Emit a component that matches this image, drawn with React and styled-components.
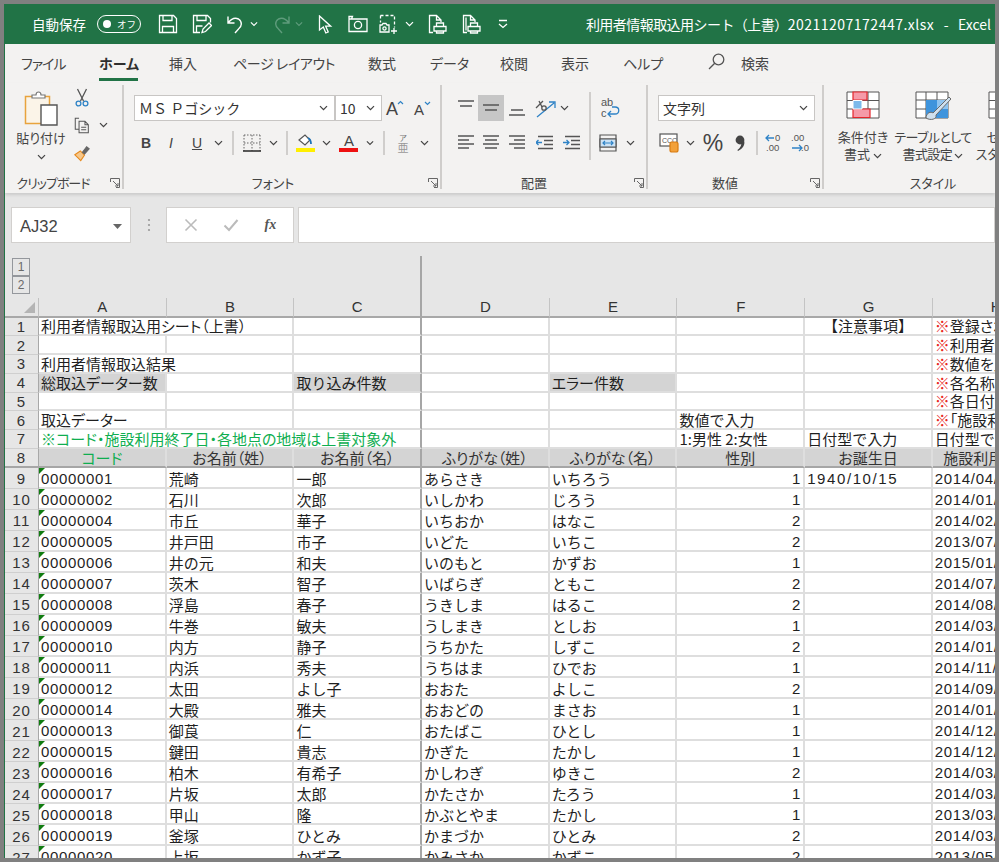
import React from 'react';
import styled, { createGlobalStyle } from 'styled-components';

const UI_FONT = '"Noto Sans CJK JP", "Noto Sans", sans-serif';
const GREEN = '#217346';
const INK = '#444444';

const GlobalStyle = createGlobalStyle`
    html, body { margin: 0; padding: 0; background: #808080; }
    body { font-family: ${UI_FONT}; }
`;

const Frame = styled.div`
    width: 999px;
    height: 862px;
    box-sizing: border-box;
    border: 4px solid #808080;
    overflow: hidden;
`;

const Inner = styled.div`
    height: 100%;
    box-sizing: border-box;
    border-left: 1px solid ${GREEN};
    background: #e6e6e6;
    overflow: hidden;
`;

/* title bar */
const TitleBar = styled.div`
    height: 40px;
    background: ${GREEN};
    color: #fff;
    display: flex;
    align-items: center;
    padding-left: 27px;
`;

const AutoSave = styled.span`
    font-size: 13.5px;
    width: 65px;
    font-feature-settings: "palt";
`;

const Toggle = styled.div`
    width: 44px;
    height: 18px;
    box-sizing: border-box;
    border: 1px solid #fff;
    border-radius: 9px;
    display: flex;
    align-items: center;
    padding-left: 5px;
    font-size: 9.5px;
    margin-right: 8px;
    &::before {
        content: '';
        width: 8px;
        height: 8px;
        border-radius: 50%;
        background: #fff;
        margin-right: 6px;
    }
`;

const QuickTool = styled.div`
    width: ${p => p.$w}px;
    margin-left: ${p => p.$ml || 0}px;
    display: flex;
    align-items: center;
    justify-content: center;
    flex: none;
`;

const FileName = styled.div`
    margin-left: auto;
    padding-right: 4px;
    font-size: 14px;
    white-space: pre;
`;

const FilePrefix = styled.span`
    letter-spacing: -0.55px;
`;

const FileStamp = styled.span`
    letter-spacing: 0.5px;
`;

/* tabs */
const TabBar = styled.div`
    height: 39px;
    background: #f3f2f1;
    display: flex;
    align-items: center;
    padding-left: 16px;
    padding-bottom: 1px;
    box-sizing: border-box;
`;

const Tab = styled.div`
    width: ${p => p.$w}px;
    flex: none;
    font-size: 14px;
    color: ${INK};
    white-space: pre;
    font-feature-settings: "palt";
    letter-spacing: ${p => p.$ls || 0}px;
    position: relative;
    font-weight: ${p => (p.$active ? 700 : 400)};
    ${p => p.$active && `color: #2f2f2f;
    &::after {
        content: '';
        position: absolute;
        left: 0;
        top: 25px;
        width: 39px;
        height: 3px;
        background: ${GREEN};
    }`}
`;

/* ribbon */
const Ribbon = styled.div`
    height: 110px;
    background: #f3f2f1;
    display: flex;
    padding-top: 2px;
    padding-bottom: 4px;
    box-sizing: border-box;
    box-shadow: 0 2px 3px rgba(0, 0, 0, 0.12);
    overflow: hidden;
    position: relative;
`;

const Group = styled.div`
    width: ${p => p.$w}px;
    flex: none;
    box-sizing: border-box;
    ${p => !p.$last && 'border-right: 2px solid #cfcdcb;'}
    display: flex;
    flex-direction: column;
`;

const GroupBody = styled.div`
    flex: 1;
    display: flex;
    padding-left: ${p => p.$pad || 0}px;
    min-height: 0;
`;

const GroupLabel = styled.div`
    height: 12px;
    font-size: 13px;
    line-height: 12px;
    text-align: center;
    color: ${INK};
    position: relative;
    font-feature-settings: "palt";
    letter-spacing: ${p => p.$ls || 0}px;
    padding-right: ${p => p.$shift || 0}px;
`;

const Launcher = styled.svg`
    position: absolute;
    right: 2px;
    top: 1px;
    width: 10px;
    height: 10px;
`;

const Stack = styled.div`
    display: flex;
    flex-direction: column;
    padding-top: 10px;
    gap: 10px;
`;

const ToolRow = styled.div`
    height: 25.5px;
    display: flex;
    align-items: center;
    flex: none;
`;

const Tool = styled.div`
    width: ${p => p.$w}px;
    height: ${p => (p.$on ? '26px' : 'auto')};
    flex: none;
    display: flex;
    align-items: center;
    justify-content: center;
    font-family: "Liberation Sans", sans-serif;
    color: ${INK};
    background: ${p => (p.$on ? '#c6c6c6' : 'transparent')};
`;

const VSep = styled.div`
    width: 2px;
    height: ${p => p.$h || 24}px;
    background: #d0cecc;
    flex: none;
    margin-left: ${p => p.$ml || 0}px;
    margin-top: ${p => p.$mt || 0}px;
`;

const SelectBox = styled.div`
    width: ${p => p.$w}px;
    height: 25.5px;
    box-sizing: border-box;
    background: #fff;
    border: 1px solid #c8c6c4;
    display: flex;
    align-items: center;
    padding: 0 6px 0 4px;
    flex: none;
    font-size: 14px;
    color: #333;
    white-space: pre;
    justify-content: space-between;
`;

const PasteCol = styled.div`
    width: 66px;
    margin-left: 3px;
    display: flex;
    flex-direction: column;
    align-items: center;
    padding-top: 5px;
    font-size: 13px;
    color: ${INK};
    font-feature-settings: "palt";
`;

const PasteText = styled.div`
    margin-top: 3px;
    margin-bottom: 7px;
    line-height: 18px;
`;

const ClipTools = styled.div`
    display: flex;
    flex-direction: column;
    padding-top: 3px;
    gap: 9px;
`;

const ClipRow = styled.div`
    display: flex;
    align-items: center;
`;

const StyleItem = styled.div`
    width: ${p => p.$w}px;
    flex: none;
    display: flex;
    flex-direction: column;
    align-items: center;
    padding-top: 6px;
    font-size: 13px;
    line-height: 17px;
    color: ${INK};
    white-space: nowrap;
    font-feature-settings: "palt";
`;

const StyleIconSlot = styled.div`
    margin-left: ${p => p.$ml || 0}px;
    height: 30px;
`;

const StyleText = styled.div`
    margin-top: 7px;
    text-align: center;
    letter-spacing: ${p => p.$ls || 0}px;
`;

/* formula bar */
const FormulaBar = styled.div`
    display: flex;
    align-items: stretch;
    height: 36px;
    margin-top: 14px;
    padding-left: 6px;
    gap: 4px;
`;

const NameBox = styled.div`
    width: 120px;
    box-sizing: border-box;
    background: #fff;
    border: 1px solid #d2d0ce;
    display: flex;
    align-items: center;
    justify-content: space-between;
    padding: 3px 8px 0 8px;
    font-family: "Liberation Sans", sans-serif;
    font-size: 16.5px;
    color: ${INK};
`;

const DotsCol = styled.div`
    width: 27px;
    display: flex;
    align-items: center;
    justify-content: center;
`;

const FormulaTools = styled.div`
    width: 128px;
    box-sizing: border-box;
    background: #fff;
    border: 1px solid #d2d0ce;
    display: flex;
    align-items: center;
    justify-content: space-around;
    padding: 0 4px;
`;

const FormulaInput = styled.div`
    flex: 1;
    background: #fff;
    border: 1px solid #d2d0ce;
`;

/* outline + grid */
const OutlineBar = styled.div`
    height: 42px;
    margin-top: 13px;
    width: 417px;
    box-sizing: border-box;
    border-right: 2px solid #a6a6a6;
    display: flex;
    flex-direction: column;
    padding: 2px 0 0 7px;
`;

const LevelButton = styled.div`
    width: 18px;
    height: 18px;
    box-sizing: border-box;
    border: 1px solid #94979c;
    background: #e6e6e6;
    color: #6a6a6a;
    font-family: "Liberation Sans", sans-serif;
    font-size: 12px;
    display: flex;
    align-items: center;
    justify-content: center;
`;

const Sheet = styled.div`
    display: grid;
    grid-template-columns: 34px repeat(8, 127.7px);
    grid-template-rows: 19.5px repeat(8, 18.75px) repeat(19, 21.05px);
    background: #fff;
`;

const Corner = styled.div`
    background: #e6e6e6;
    border-right: 1px solid #c0c0c0;
    border-bottom: 2px solid #a8a8a8;
    box-sizing: border-box;
    position: relative;
    &::after {
        content: '';
        position: absolute;
        right: 3px;
        bottom: 3px;
        border-style: solid;
        border-width: 0 0 11px 11px;
        border-color: transparent transparent #b4b4b4 transparent;
    }
`;

const ColHead = styled.div`
    background: #e6e6e6;
    box-sizing: border-box;
    border-right: ${p => (p.$freeze ? '2px solid #a6a6a6' : '1px solid #c4c4c4')};
    border-bottom: 2px solid #a8a8a8;
    font-family: "Liberation Sans", sans-serif;
    font-size: 15px;
    color: #333;
    display: flex;
    align-items: center;
    justify-content: center;
`;

const RowHead = styled.div`
    background: #e6e6e6;
    box-sizing: border-box;
    border-right: 1px solid #a8a8a8;
    border-bottom: ${p => (p.$band ? '2px solid #a6a6a6' : '1px solid #cfcfcf')};
    font-family: "Liberation Sans", sans-serif;
    font-size: 15px;
    letter-spacing: 1px;
    color: #333;
    display: flex;
    align-items: center;
    justify-content: center;
    padding-top: ${p => (p.$tall ? 2 : 0)}px;
`;

const Cell = styled.div`
    box-sizing: border-box;
    position: relative;
    min-width: 0;
    border-right: ${p => (p.$freeze ? '2px solid #a6a6a6' : p.$open ? '0' : '2px solid #dedede')};
    border-bottom: ${p => (p.$band ? '2px solid #a6a6a6' : '2px solid #dedede')};
    background: ${p => (p.$fill ? '#d4d4d4' : 'transparent')};
    display: flex;
    align-items: center;
    justify-content: ${p => p.$align || 'flex-start'};
    padding: ${p => (p.$tall ? '2px' : '0')} 2px 0 2px;
    font-size: 15px;
    line-height: 17px;
    white-space: nowrap;
    color: ${p => p.$color || '#1f1f1f'};
    ${p => p.$palt && 'font-feature-settings: "palt";'}
    &::before {
        ${p => p.$flag && `content: '';
        position: absolute;
        left: 0;
        top: 0;
        border-style: solid;
        border-width: 6px 6px 0 0;
        border-color: #107c10 transparent transparent transparent;`}
    }
`;

const Digits = styled.span`
    font-family: "Liberation Sans", sans-serif;
    letter-spacing: ${p => p.$gap || 0.66}px;
`;

const Alert = styled.span`
    color: #e8281e;
`;

/* icons */
const Chev = ({ c = INK, s = 9 }) => (
    <svg width={s} height={s * 0.7} viewBox="0 0 9 6" fill="none" stroke={c} strokeWidth="1.3"><path d="M1 1l3.5 3.5L8 1" /></svg>
);

const Lines = ({ d }) => (
    <svg width="20" height="20" viewBox="0 0 20 20" fill="none" stroke="#555" strokeWidth="1.3"><path d={d} /></svg>
);

const SaveIcon = () => (
    <svg width="20" height="20" viewBox="0 0 20 20" fill="none" stroke="#fff" strokeWidth="1.3">
        <path d="M1.5 1.5h14l3 3v14h-17z M5 1.5v5h9v-5 M4.5 18.5v-6h11v6" />
    </svg>
);

const SaveAsIcon = () => (
    <svg width="20" height="20" viewBox="0 0 20 20" fill="none" stroke="#fff" strokeWidth="1.3">
        <path d="M8 18.5H1.5v-17h14l3 3v4 M5 1.5v5h9v-5 M4.5 18v-6h6" />
        <path d="M10 18.5l1-3.5 6-6 2.5 2.5-6 6z" />
    </svg>
);

const UndoIcon = ({ c = '#fff', flip }) => (
    <svg width="20" height="20" viewBox="0 0 20 20" fill="none" stroke={c} strokeWidth="1.4" transform={flip ? 'scale(-1 1)' : undefined}>
        <path d="M2 2.5v6.5h6.5 M2.5 8.5c3-4 7-5 10-3.5 4 2.5 3.5 7.5 0 10l-3.5 4" />
    </svg>
);

const CursorIcon = () => (
    <svg width="15" height="19" viewBox="0 0 15 19" fill="none" stroke="#fff" strokeWidth="1.3">
        <path d="M1.5 1v14l3.8-3 2.5 6 2.4-1-2.5-5.8h5z" />
    </svg>
);

const CameraIcon = () => (
    <svg width="20" height="18" viewBox="0 0 20 18" fill="none" stroke="#fff" strokeWidth="1.3">
        <path d="M1 4h2.5l1-2.5H1z M1 4h18v12.5H1z" />
        <circle cx="10" cy="10" r="3.6" />
    </svg>
);

const SnipIcon = () => (
    <svg width="18" height="20" viewBox="0 0 18 20" fill="none" stroke="#fff" strokeWidth="1.3">
        <path d="M1.5 1.5h14v12 M1.5 1.5v7" strokeDasharray="3 2" />
        <path d="M1 11h2l1-1.5h3l1 1.5h2v7H1z" />
        <circle cx="5.5" cy="14.5" r="1.6" />
        <path d="M15 14v6 M12 17h6" />
    </svg>
);

const PrintIcon = ({ stacked }) => (
    <svg width="19" height="20" viewBox="0 0 19 20" fill="none" stroke="#fff" strokeWidth="1.3">
        <path d="M5 18.5H1.5v-17h7l4.5 4.5v2 M8.5 1.5v4.5H13" />
        {stacked && <path d="M4 3.5v13" />}
        <path d="M6 12.5h12v4.5H6z M8.5 12.5v-3.5h7v3.5 M8.5 17v2h7v-2" />
    </svg>
);

const CustomizeIcon = () => (
    <svg width="10" height="10" viewBox="0 0 10 10" fill="none" stroke="#fff" strokeWidth="1.3"><path d="M1 1.5h8 M1 5l4 3.5L9 5" /></svg>
);

const SearchIcon = () => (
    <svg width="17" height="17" viewBox="0 0 17 17" fill="none" stroke="#555" strokeWidth="1.3">
        <circle cx="10.5" cy="6.5" r="5.3" /><path d="M6.7 10.3L1 16" />
    </svg>
);

const PasteIcon = () => (
    <svg width="34" height="36" viewBox="0 0 34 36" fill="none">
        <path d="M1.5 6.5h24v27h-24z" stroke="#e8a33d" strokeWidth="1.5" fill="#fbf4e8" />
        <path d="M8 8V5h4c0-4 5-4 5 0h4v3z" stroke="#777" strokeWidth="1.2" fill="#fff" />
        <path d="M17 15h16v20H17z" stroke="#555" strokeWidth="1.4" fill="#fff" />
    </svg>
);

const CutIcon = () => (
    <svg width="14" height="19" viewBox="0 0 14 19" fill="none" strokeWidth="1.3">
        <path d="M2.5 1l6 12 M11.5 1l-6 12" stroke="#555" />
        <circle cx="3.5" cy="15.5" r="2.4" stroke="#2f83c6" /><circle cx="10.5" cy="15.5" r="2.4" stroke="#2f83c6" />
    </svg>
);

const CopyIcon = () => (
    <svg width="19" height="19" viewBox="0 0 19 19" fill="none" stroke="#555" strokeWidth="1.2">
        <path d="M6 1H1.5v13H6" /><path d="M6 4.5h7l4 4v9.5H6z M13 4.5v4h4 M8.5 11.5h6 M8.5 14.5h6" />
    </svg>
);

const BrushIcon = () => (
    <svg width="19" height="19" viewBox="0 0 19 19" fill="none" strokeWidth="1.3">
        <path d="M1 11l6.5-4.5 5 5L8 18C6 16 3 13 1 11z" stroke="#e68a1e" fill="#f6c78a" />
        <path d="M10 8l5-6.5 3 2.5-5.5 6z" fill="#666" stroke="#666" />
    </svg>
);

const AlignLines = {
    top: 'M2 3h16 M4 8h12',
    middle: 'M2 7h16 M4 12h12',
    bottom: 'M4 12h12 M2 17h16',
    left: 'M2 3h16 M2 7h11 M2 11h16 M2 15h11',
    center: 'M2 3h16 M4 7h12 M2 11h16 M4 15h12',
    right: 'M2 3h16 M7 7h11 M2 11h16 M7 15h11',
};

const IndentIcon = ({ inc }) => (
    <svg width="18" height="16" viewBox="0 0 18 16" fill="none" strokeWidth="1.3">
        <path d="M2 1.5h15 M8 5.5h9 M8 9.5h9 M2 13.5h15" stroke="#555" />
        <path d={inc ? 'M0 7.5h6 M3.5 5l2.5 2.5L3.5 10' : 'M6 7.5H0 M2.5 5L0 7.5 2.5 10'} stroke="#2f83c6" />
    </svg>
);

const OrientIcon = () => (
    <svg width="22" height="20" viewBox="0 0 22 20" fill="none" strokeWidth="1.3">
        <path d="M3 19L20 5 M15 4h6v6" stroke="#2f83c6" />
        <path d="M2 10l7-7 M5 3l3 6" stroke="#555" />
        <circle cx="10" cy="10" r="2.2" stroke="#555" />
    </svg>
);

const WrapIcon = () => (
    <svg width="20" height="22" viewBox="0 0 20 22" fill="none" strokeWidth="1.3">
        <text x="1" y="9" fontSize="11" fontFamily="Liberation Sans, sans-serif" fill="#555">ab</text>
        <text x="1" y="20" fontSize="11" fontFamily="Liberation Sans, sans-serif" fill="#555">c</text>
        <path d="M8 17h7c5 0 5-7 0-7h-3 M11 14l-3 3 3 3" stroke="#2f83c6" />
    </svg>
);

const MergeIcon = () => (
    <svg width="18" height="18" viewBox="0 0 18 18" strokeWidth="1.2">
        <path d="M1 1h16v16H1z M1 5h16 M1 13h16" stroke="#555" fill="none" />
        <path d="M1 5h16v8H1z" fill="#cde3f5" stroke="#555" />
        <path d="M4 9h10 M6 7L4 9l2 2 M12 7l2 2-2 2" stroke="#2f83c6" fill="none" />
    </svg>
);

const BorderIcon = () => (
    <svg width="18" height="18" viewBox="0 0 18 18" fill="none" stroke="#666" strokeWidth="1">
        <path d="M1 1h16 M1 1v16 M17 1v16 M1 9h16 M9 1v16" strokeDasharray="1.5 1.5" />
        <path d="M0 17h18" strokeWidth="1.6" stroke="#333" />
    </svg>
);

const FillIcon = () => (
    <svg width="20" height="20" viewBox="0 0 20 20" fill="none">
        <path d="M3 7l6-5 5 5-5 5z" stroke="#555" strokeWidth="1.2" fill="#fff" />
        <path d="M15 11c0-3-1-5-3-6" stroke="#1b72b8" strokeWidth="1.8" />
        <rect x="0" y="15" width="19" height="4" fill="#ffef00" />
    </svg>
);

const FontColorIcon = () => (
    <svg width="20" height="20" viewBox="0 0 20 20">
        <text x="10" y="13" textAnchor="middle" fontSize="15" fontFamily="Liberation Sans, sans-serif" fill="#444">A</text>
        <rect x="0" y="15" width="19" height="4" fill="#ee1111" />
    </svg>
);

const PhoneticIcon = () => (
    <svg width="16" height="20" viewBox="0 0 16 20">
        <text x="8" y="8" textAnchor="middle" fontSize="8" fontFamily="Noto Sans CJK JP, sans-serif" fill="#777">ア</text>
        <text x="8" y="19" textAnchor="middle" fontSize="11" fontFamily="Noto Sans CJK JP, sans-serif" fill="#999">亜</text>
    </svg>
);

const GrowFont = ({ up }) => (
    <svg width="20" height="20" viewBox="0 0 20 20">
        <text x="7" y="17" textAnchor="middle" fontSize={up ? 18 : 15} fontFamily="Liberation Sans, sans-serif" fill="#444">A</text>
        <path d={up ? 'M13 6l2.5-2.5L18 6' : 'M13 4l2.5 2.5L18 4'} fill="none" stroke="#2f83c6" strokeWidth="1.2" />
    </svg>
);

const AccountIcon = () => (
    <svg width="22" height="22" viewBox="0 0 22 22" fill="none" strokeWidth="1.2">
        <rect x="1" y="2" width="17" height="12" fill="#fff" stroke="#555" />
        <text x="3" y="11" fontSize="7" fontFamily="Liberation Sans, sans-serif" fill="#555">CCC</text>
        <rect x="11" y="10" width="8" height="10" rx="2" fill="#f2a13a" stroke="#d97d12" />
    </svg>
);

const CommaIcon = () => (
    <svg width="12" height="18" viewBox="0 0 12 18" fill="#444">
        <circle cx="6" cy="6" r="4.4" />
        <path d="M7 6c3 0 3.5 1 3.4 3-.2 3.5-3 6.5-6.4 8l-.6-1C6 14.5 8 11 7 8z" />
    </svg>
);

const Decimal = ({ inc }) => (
    <svg width="22" height="20" viewBox="0 0 22 20" fill="none">
        <text x={inc ? 10 : 0} y="8" fontSize="9.5" fontFamily="Liberation Sans, sans-serif" fill="#555">{inc ? '0' : '.00'}</text>
        <text x={inc ? 1 : 10} y="18" fontSize="9.5" fontFamily="Liberation Sans, sans-serif" fill="#555">{inc ? '.00' : '.0'}</text>
        <path d={inc ? 'M9 5H1 M4 2L1 5l3 3' : 'M1 15h10 M8 12l3 3-3 3'} stroke="#2f83c6" strokeWidth="1.3" />
    </svg>
);

const CondFormatIcon = () => (
    <svg width="34" height="28" viewBox="0 0 34 28" strokeWidth="1">
        <path d="M1 1h32v26H1z M1 9.5h32 M1 18h32 M11 1v26 M22 1v26" fill="#fff" stroke="#555" />
        <path d="M7 1h14v8H7z M7 18h17v8.5H7z" fill="#f59aa8" stroke="#e5262c" strokeWidth="1.2" />
        <path d="M7 9.5h9V18H7z" fill="#7cb9ea" stroke="#fff" />
    </svg>
);

const TableFormatIcon = () => (
    <svg width="36" height="30" viewBox="0 0 36 30" strokeWidth="1">
        <path d="M1 1h32v26H1z M1 9h32 M1 18h32 M11 1v26 M22 1v26" fill="#fff" stroke="#555" />
        <path d="M11 9h22v18H11z" fill="#3f94dc" />
        <path d="M22 9h11v9H22z" fill="#8fc4f0" />
        <path d="M11 27c0-5 5-7 7-5L34 6l2 2-15 16c1 4-5 6-10 3z" fill="#cfe0ee" stroke="#6a6a6a" />
    </svg>
);

const CellStyleIcon = () => (
    <svg width="34" height="28" viewBox="0 0 34 28" strokeWidth="1">
        <path d="M1 1h32v26H1z M1 9.5h32 M1 18h32 M11 1v26" fill="#fff" stroke="#555" />
        <path d="M11 9.5h12V18H11z" fill="#3f94dc" />
    </svg>
);

const DotsIcon = () => (
    <svg width="4" height="14" viewBox="0 0 4 14" fill="#9a9a9a"><circle cx="2" cy="2" r="1.1" /><circle cx="2" cy="7" r="1.1" /><circle cx="2" cy="12" r="1.1" /></svg>
);

const FxGlyph = styled.span`
    font-family: "Liberation Serif", serif;
    font-style: italic;
    font-weight: 700;
    font-size: 14px;
    color: #555;
`;

const LauncherIcon = () => (
    <Launcher viewBox="0 0 10 10" fill="none" stroke="#666" strokeWidth="1">
        <path d="M.5 4V.5H9.5V9.5H6 M3 3l5 5 M8 5v3H5" />
    </Launcher>
);

const BoldGlyph = styled.span`
    font-size: 14px;
    font-weight: ${p => (p.$b ? 700 : 400)};
    font-style: ${p => (p.$i ? 'italic' : 'normal')};
    text-decoration: ${p => (p.$u ? 'underline' : 'none')};
`;

const PercentGlyph = styled.span`
    font-size: 23px;
`;

/* sheet data */
const people = [
    ['00000001', '荒崎', '一郎', 'あらさき', 'いちろう', 1, '2014/04/01'],
    ['00000002', '石川', '次郎', 'いしかわ', 'じろう', 1, '2014/01/01'],
    ['00000004', '市丘', '華子', 'いちおか', 'はなこ', 2, '2014/02/01'],
    ['00000005', '井戸田', '市子', 'いどた', 'いちこ', 2, '2013/07/01'],
    ['00000006', '井の元', '和夫', 'いのもと', 'かずお', 1, '2015/01/01'],
    ['00000007', '茨木', '智子', 'いばらぎ', 'ともこ', 2, '2014/07/01'],
    ['00000008', '浮島', '春子', 'うきしま', 'はるこ', 2, '2014/08/01'],
    ['00000009', '牛巻', '敏夫', 'うしまき', 'としお', 1, '2014/03/01'],
    ['00000010', '内方', '静子', 'うちかた', 'しずこ', 2, '2014/01/01'],
    ['00000011', '内浜', '秀夫', 'うちはま', 'ひでお', 1, '2014/11/01'],
    ['00000012', '太田', 'よし子', 'おおた', 'よしこ', 2, '2014/09/01'],
    ['00000014', '大殿', '雅夫', 'おおどの', 'まさお', 1, '2014/01/01'],
    ['00000013', '御莨', '仁', 'おたばこ', 'ひとし', 1, '2014/12/01'],
    ['00000015', '鍵田', '貴志', 'かぎた', 'たかし', 1, '2014/12/01'],
    ['00000016', '柏木', '有希子', 'かしわぎ', 'ゆきこ', 2, '2014/03/01'],
    ['00000017', '片坂', '太郎', 'かたさか', 'たろう', 1, '2014/03/01'],
    ['00000018', '甲山', '隆', 'かぶとやま', 'たかし', 1, '2013/03/01'],
    ['00000019', '釜塚', 'ひとみ', 'かまづか', 'ひとみ', 2, '2014/03/01'],
    ['00000020', '上坂', 'かず子', 'かみさか', 'かずこ', 2, '2013/05/01'],
];

const notes = {
    1: { A: '利用者情報取込用シート（上書）', G: '【注意事項】', H: '登録され' },
    2: { H: '利用者情' },
    3: { A: '利用者情報取込結果', H: '数値を入' },
    4: { A: '総取込データー数', C: '取り込み件数', E: 'エラー件数', H: '各名称は' },
    5: { H: '各日付は' },
    6: { A: '取込データー', F: '数値で入力', H: '「施設利' },
    7: { A: '※コード・施設利用終了日・各地点の地域は上書対象外', F: '1:男性 2:女性', G: '日付型で入力', I: '日付型で入力' },
};

const fills = { '4A': true, '4C': true, '4E': true };
const overflowing = { '1A': true, '3A': true, '7A': true, '7B': true };
const columns = ['A', 'B', 'C', 'D', 'E', 'F', 'G', 'H'];
const headers = ['コード', 'お名前（姓）', 'お名前（名）', 'ふりがな（姓）', 'ふりがな（名）', '性別', 'お誕生日', '施設利用開始日'];

function NoteRows() {
    return [1, 2, 3, 4, 5, 6, 7].map(r => (
        <React.Fragment key={r}>
            <RowHead>{r}</RowHead>
            {columns.map(c => {
                const note = notes[r];
                let content = note[c];
                if (c === 'H') {
                    content = r === 7 ? note.I : <><Alert>※</Alert>{note.H}</>;
                }
                return (
                    <Cell
                        key={c}
                        $fill={fills[r + c]}
                        $open={overflowing[r + c]}
                        $freeze={c === 'C'}
                        $palt={c === 'A' || c === 'E' || (c === 'H' && r !== 7)}
                        $align={r === 1 && c === 'G' ? 'center' : undefined}
                        $color={r === 7 && c === 'A' ? '#0fae50' : undefined}
                    >
                        {content}
                    </Cell>
                );
            })}
        </React.Fragment>
    ));
}

function PersonRow({ row, person }) {
    const [code, last, first, lastKana, firstKana, sex, start] = person;
    return (
        <>
            <RowHead $tall>{row}</RowHead>
            <Cell $tall $flag><Digits>{code}</Digits></Cell>
            <Cell $tall>{last}</Cell>
            <Cell $tall $freeze>{first}</Cell>
            <Cell $tall>{lastKana}</Cell>
            <Cell $tall>{firstKana}</Cell>
            <Cell $tall $align="flex-end"><Digits>{sex}</Digits></Cell>
            <Cell $tall>{row === 9 && <Digits $gap={1.6}>1940/10/15</Digits>}</Cell>
            <Cell $tall><Digits>{start}</Digits></Cell>
        </>
    );
}

export default function App() {
    return (
        <Frame>
            <GlobalStyle />
            <Inner>
                <TitleBar>
                    <AutoSave>自動保存</AutoSave>
                    <Toggle>オフ</Toggle>
                    <QuickTool $w={38}><SaveIcon /></QuickTool>
                    <QuickTool $w={30}><SaveAsIcon /></QuickTool>
                    <QuickTool $w={28} $ml={5}><UndoIcon /></QuickTool>
                    <QuickTool $w={8}><Chev c="#fff" /></QuickTool>
                    <QuickTool $w={28} $ml={9}><UndoIcon c="#5f9c7c" flip /></QuickTool>
                    <QuickTool $w={8}><Chev c="#5f9c7c" /></QuickTool>
                    <QuickTool $w={28} $ml={8}><CursorIcon /></QuickTool>
                    <QuickTool $w={38}><CameraIcon /></QuickTool>
                    <QuickTool $w={22}><SnipIcon /></QuickTool>
                    <QuickTool $w={20}><Chev c="#fff" /></QuickTool>
                    <QuickTool $w={36}><PrintIcon /></QuickTool>
                    <QuickTool $w={32}><PrintIcon stacked /></QuickTool>
                    <QuickTool $w={32}><CustomizeIcon /></QuickTool>
                    <FileName><FilePrefix>利用者情報取込用シート（上書）</FilePrefix><FileStamp>20211207172447.xlsx</FileStamp>   -   Excel</FileName>
                </TitleBar>

                <TabBar>
                    <Tab $w={78} $ls={-1}>ファイル</Tab>
                    <Tab $w={70} $active>ホーム</Tab>
                    <Tab $w={64}>挿入</Tab>
                    <Tab $w={135} $ls={-0.4}>ページ レイアウト</Tab>
                    <Tab $w={62}>数式</Tab>
                    <Tab $w={70}>データ</Tab>
                    <Tab $w={61}>校閲</Tab>
                    <Tab $w={62}>表示</Tab>
                    <Tab $w={85}>ヘルプ</Tab>
                    <Tab $w={33}><SearchIcon /></Tab>
                    <Tab $w={40}>検索</Tab>
                </TabBar>

                <Ribbon>
                    <Group $w={119}>
                        <GroupBody>
                            <PasteCol>
                                <PasteIcon />
                                <PasteText>貼り付け</PasteText>
                                <Chev />
                            </PasteCol>
                            <ClipTools>
                                <Tool $w={16}><CutIcon /></Tool>
                                <ClipRow>
                                    <Tool $w={16}><CopyIcon /></Tool>
                                    <Tool $w={26}><Chev /></Tool>
                                </ClipRow>
                                <Tool $w={16}><BrushIcon /></Tool>
                            </ClipTools>
                        </GroupBody>
                        <GroupLabel $shift={21} $ls={-1}>クリップボード<LauncherIcon /></GroupLabel>
                    </Group>

                    <Group $w={318}>
                        <GroupBody $pad={10}>
                            <Stack>
                                <ToolRow>
                                    <SelectBox $w={201}><span>ＭＳ Ｐゴシック</span><Chev /></SelectBox>
                                    <SelectBox $w={47}><span>10</span><Chev /></SelectBox>
                                    <Tool $w={26}><GrowFont up /></Tool>
                                    <Tool $w={28}><GrowFont /></Tool>
                                </ToolRow>
                                <ToolRow>
                                    <Tool $w={24}><BoldGlyph $b>B</BoldGlyph></Tool>
                                    <Tool $w={26}><BoldGlyph $i>I</BoldGlyph></Tool>
                                    <Tool $w={26}><BoldGlyph $u>U</BoldGlyph></Tool>
                                    <Tool $w={16}><Chev /></Tool>
                                    <Tool $w={14}><VSep /></Tool>
                                    <Tool $w={24}><BorderIcon /></Tool>
                                    <Tool $w={18}><Chev /></Tool>
                                    <Tool $w={10}><VSep /></Tool>
                                    <Tool $w={28}><FillIcon /></Tool>
                                    <Tool $w={12}><Chev /></Tool>
                                    <Tool $w={34}><FontColorIcon /></Tool>
                                    <Tool $w={8}><Chev /></Tool>
                                    <Tool $w={20}><VSep /></Tool>
                                    <Tool $w={18}><PhoneticIcon /></Tool>
                                    <Tool $w={24}><Chev /></Tool>
                                </ToolRow>
                            </Stack>
                        </GroupBody>
                        <GroupLabel $shift={18}>フォント<LauncherIcon /></GroupLabel>
                    </Group>

                    <Group $w={206}>
                        <GroupBody $pad={12}>
                            <Stack>
                                <ToolRow>
                                    <Tool $w={24}><Lines d={AlignLines.top} /></Tool>
                                    <Tool $w={26} $on><Lines d={AlignLines.middle} /></Tool>
                                    <Tool $w={26}><Lines d={AlignLines.bottom} /></Tool>
                                    <Tool $w={29}><OrientIcon /></Tool>
                                    <Tool $w={10}><Chev /></Tool>
                                </ToolRow>
                                <ToolRow>
                                    <Tool $w={24}><Lines d={AlignLines.left} /></Tool>
                                    <Tool $w={26}><Lines d={AlignLines.center} /></Tool>
                                    <Tool $w={26}><Lines d={AlignLines.right} /></Tool>
                                    <Tool $w={29}><IndentIcon /></Tool>
                                    <Tool $w={26}><IndentIcon inc /></Tool>
                                </ToolRow>
                            </Stack>
                            <VSep $h={68} $ml={4} $mt={7} />
                            <Stack>
                                <ToolRow><Tool $w={38}><WrapIcon /></Tool></ToolRow>
                                <ToolRow>
                                    <Tool $w={34}><MergeIcon /></Tool>
                                    <Tool $w={10}><Chev /></Tool>
                                </ToolRow>
                            </Stack>
                        </GroupBody>
                        <GroupLabel $shift={20}>配置<LauncherIcon /></GroupLabel>
                    </Group>

                    <Group $w={176}>
                        <GroupBody $pad={10}>
                            <Stack>
                                <ToolRow><SelectBox $w={157}><span>文字列</span><Chev /></SelectBox></ToolRow>
                                <ToolRow>
                                    <Tool $w={24}><AccountIcon /></Tool>
                                    <Tool $w={16}><Chev /></Tool>
                                    <Tool $w={30}><PercentGlyph>%</PercentGlyph></Tool>
                                    <Tool $w={24}><CommaIcon /></Tool>
                                    <Tool $w={10}><VSep /></Tool>
                                    <Tool $w={28}><Decimal inc /></Tool>
                                    <Tool $w={24}><Decimal /></Tool>
                                </ToolRow>
                            </Stack>
                        </GroupBody>
                        <GroupLabel $shift={20}>数値<LauncherIcon /></GroupLabel>
                    </Group>

                    <Group $w={218} $last>
                        <GroupBody $pad={3}>
                            <StyleItem $w={72}>
                                <StyleIconSlot><CondFormatIcon /></StyleIconSlot>
                                <StyleText>条件付き<br />書式 <Chev /></StyleText>
                            </StyleItem>
                            <StyleItem $w={68}>
                                <StyleIconSlot><TableFormatIcon /></StyleIconSlot>
                                <StyleText $ls={-0.6}>テーブルとして<br />書式設定 <Chev /></StyleText>
                            </StyleItem>
                            <StyleItem $w={64}>
                                <StyleIconSlot $ml={12}><CellStyleIcon /></StyleIconSlot>
                                <StyleText>セル<br />スタイル</StyleText>
                            </StyleItem>
                        </GroupBody>
                        <GroupLabel>スタイル</GroupLabel>
                    </Group>
                </Ribbon>

                <FormulaBar>
                    <NameBox>
                        <span>AJ32</span>
                        <svg width="9" height="5" viewBox="0 0 9 5" fill="#666"><path d="M0 0h9L4.5 5z" /></svg>
                    </NameBox>
                    <DotsCol><DotsIcon /></DotsCol>
                    <FormulaTools>
                        <svg width="14" height="14" viewBox="0 0 14 14" fill="none" stroke="#bbb" strokeWidth="1.6"><path d="M1.5 1.5l11 11 M12.5 1.5l-11 11" /></svg>
                        <svg width="16" height="14" viewBox="0 0 16 14" fill="none" stroke="#bbb" strokeWidth="2"><path d="M1.5 7.5l4.5 4.5 8.5-10" /></svg>
                        <FxGlyph>fx</FxGlyph>
                    </FormulaTools>
                    <FormulaInput />
                </FormulaBar>

                <OutlineBar>
                    <LevelButton>1</LevelButton>
                    <LevelButton>2</LevelButton>
                </OutlineBar>

                <Sheet>
                    <Corner />
                    {columns.map(c => <ColHead key={c} $freeze={c === 'C'}>{c}</ColHead>)}
                    <NoteRows />
                    <RowHead $band>8</RowHead>
                    {headers.map((h, i) => (
                        <Cell key={h} $fill $band $palt $freeze={i === 2} $align="center" $color={i === 0 ? '#0fae50' : '#333'}>{h}</Cell>
                    ))}
                    {people.map((p, i) => <PersonRow key={p[0]} row={i + 9} person={p} />)}
                </Sheet>
            </Inner>
        </Frame>
    );
}
